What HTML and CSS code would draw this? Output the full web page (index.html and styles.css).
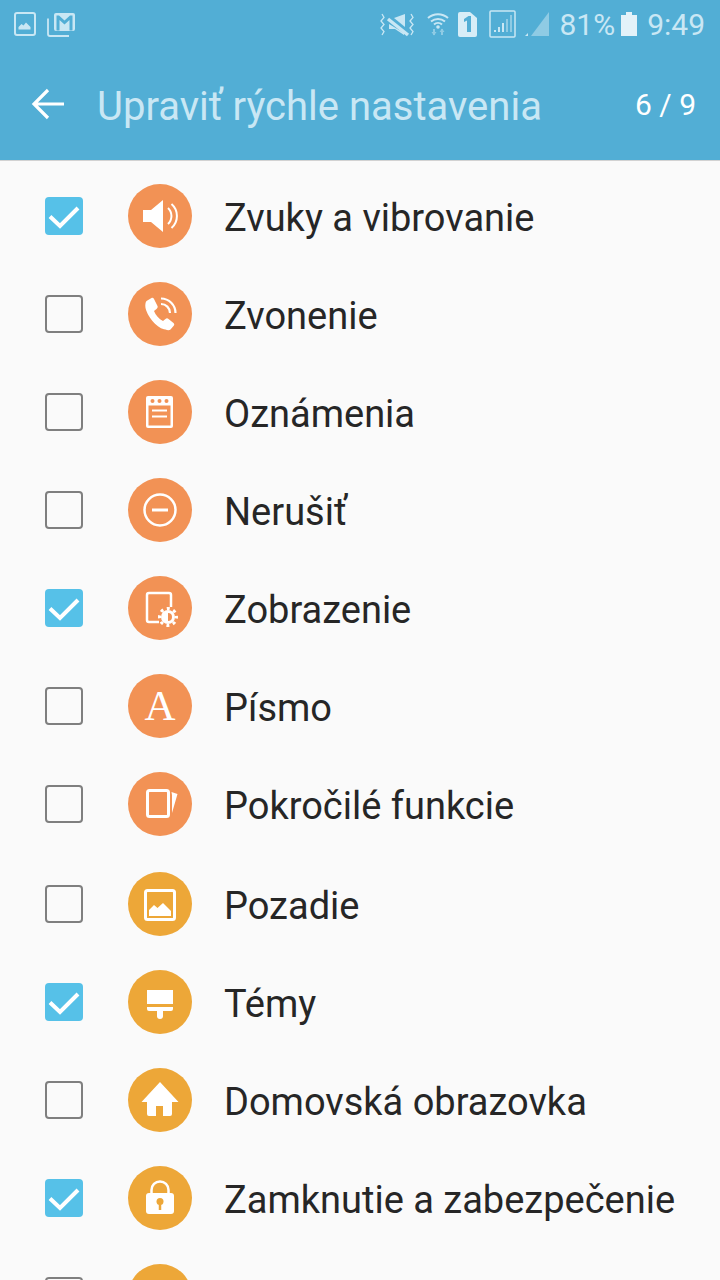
FILE: index.html
```html
<!DOCTYPE html>
<html lang="sk">
<head>
<meta charset="utf-8">
<title>Upraviť rýchle nastavenia</title>
<link rel="stylesheet" href="styles.css">
</head>
<body>
<svg class="defs" width="0" height="0" aria-hidden="true">
  <symbol id="chk" viewBox="0 0 38 38"><path d="M5 19.500 L15 29 L33 11" fill="none" stroke="#fff" stroke-width="4"/></symbol>
</svg>
<header class="appbar">
  <div class="status">
    <div class="status-left">
      <svg class="si" width="22" height="24" viewBox="0 0 22 24"><rect x="1" y="1" width="20" height="22" rx="2" fill="none" stroke="#c9e7f4" stroke-width="2"/><path d="M4.500 17.500V15l3-3 2 1.500 2.500-3 4.500 4.500v2.500z" fill="#c9e7f4"/></svg>
      <svg class="si" width="29" height="25" viewBox="0 0 29 25"><path d="M1 6.500V22a2 2 0 0 0 2 2h19" fill="none" stroke="#c9e7f4" stroke-width="1.800"/><rect x="7" y="1" width="21" height="18" rx="2" fill="#c9e7f4"/><path d="M9.500 3.500v15h3V8l5 4.500 5-4.500v10.500h3v-15h-2.500l-5.500 5-5.500-5z" fill="#52aed5"/></svg>
    </div>
    <div class="status-right">
      <svg class="mute" width="36" height="24" viewBox="0 0 36 24"><path d="M26 1v13L15 5z" fill="#c9e7f4"/><path d="M9 6l20 16" stroke="#c9e7f4" stroke-width="3.500"/><path d="M10 11v5h6l9 6v-2z" fill="#c9e7f4"/><path d="M3 1l2 3.500-3 3.500 3 3.500-3 3.500 3 3.500-2 3.500M32 1l2 3.500-3 3.500 3 3.500-3 3.500 3 3.500-2 3.500" fill="none" stroke="#c9e7f4" stroke-width="1.300"/></svg>
      <svg class="wifi" width="22" height="24" viewBox="0 0 22 24"><path d="M1 6a15 15 0 0 1 20 0M4 9.500a11 11 0 0 1 14 0M7 12.500a6 6 0 0 1 8 0" fill="none" stroke="#c9e7f4" stroke-width="2"/><circle cx="11" cy="15" r="1.800" fill="#c9e7f4"/><path d="M7 17v6M15 17v6" stroke="#8fcbe4" stroke-width="2"/><path d="M4.500 20h5L7 23.500zM12.500 20h5L15 16.500z" fill="#8fcbe4"/></svg>
      <svg class="sim" width="19" height="25" viewBox="0 0 19 25"><path d="M2 0h10l7 6v17a2 2 0 0 1-2 2H2a2 2 0 0 1-2-2V2a2 2 0 0 1 2-2z" fill="#d7edf7"/><path d="M6 7l4.500-3H13v16H9V8.500L6 10z" fill="#52aed5"/></svg>
      <svg class="sig" width="27" height="28" viewBox="0 0 27 28"><rect x="1" y="1" width="25" height="26" rx="1" fill="none" stroke="#c9e7f4" stroke-width="1.500"/><path d="M5 20h2v2H5zM9 17h2v5H9zM13 13h2v9h-2z" fill="#c9e7f4"/><path d="M17 9h2v13h-2zM21 5h2v17h-2z" fill="#8fcbe4"/></svg>
      <svg class="sig2" width="24" height="24" viewBox="0 0 24 24"><path d="M24 0v24H6z" fill="#8fcbe4"/><path d="M0 24l3-3v3z" fill="#c9e7f4"/></svg>
      <span class="pct">81%</span>
      <svg class="bat" width="16" height="24" viewBox="0 0 16 24"><path d="M0 3h5V0h6v3h5v21H0z" fill="#e3f2f9"/></svg>
      <span class="time">9:49</span>
    </div>
  </div>
  <div class="toolbar">
    <svg class="back" width="34" height="32" viewBox="0 0 34 32"><path d="M33 16H3M17 2L3 16l14 14" fill="none" stroke="#fff" stroke-width="3.200"/></svg>
    <h1 class="title">Upraviť rýchle nastavenia</h1>
    <span class="step">6 / 9</span>
  </div>
</header>
<main class="list">
  <div class="group">
    <div class="row"><span class="box on"><svg width="38" height="38"><use href="#chk"/></svg></span><span class="disc orange"><svg width="64" height="64" viewBox="0 0 64 64"><path d="M15 26h8l12-10v32L23 38h-8z" fill="#fff"/><path d="M40 24a11 11 0 0 1 0 16M43.500 20a16 16 0 0 1 0 24" fill="none" stroke="#fff" stroke-width="2"/></svg></span><span class="label">Zvuky a vibrovanie</span></div>
    <div class="row"><span class="box"></span><span class="disc orange"><svg width="64" height="64" viewBox="0 0 64 64"><path d="M18.500 19l5-3c1-.5 2 0 2.500 1l3.500 7c.5 1 0 2-1 3l-2.500 2c1.500 4 5 8 9 10l2.500-2c1-1 2-1 3 0l5 4c1 1 1 2 0 3l-3 3.500c-1 1-3 1-5 0C30 47 20 36 17.500 26c-.5-3 0-6 1-7z" fill="#fff"/><path d="M33 16.500a14.500 14.500 0 0 1 14.500 14.500M33 22a9 9 0 0 1 9 9" fill="none" stroke="#fff" stroke-width="2.200"/></svg></span><span class="label">Zvonenie</span></div>
    <div class="row"><span class="box"></span><span class="disc orange"><svg width="64" height="64" viewBox="0 0 64 64"><rect x="18" y="16" width="27" height="32" rx="2" fill="#fff"/><rect x="20.500" y="25.500" width="22" height="20" fill="#f29255"/><circle cx="24.500" cy="21" r="2" fill="#f29255"/><circle cx="31.500" cy="21" r="2" fill="#f29255"/><circle cx="38.500" cy="21" r="2" fill="#f29255"/><path d="M24 30.500h15M24 36.500h15" stroke="#fff" stroke-width="2"/></svg></span><span class="label">Oznámenia</span></div>
    <div class="row"><span class="box"></span><span class="disc orange"><svg width="64" height="64" viewBox="0 0 64 64"><circle cx="32" cy="32" r="15.500" fill="none" stroke="#fff" stroke-width="2.500"/><path d="M24 32h16" stroke="#fff" stroke-width="3"/></svg></span><span class="label">Nerušiť</span></div>
    <div class="row"><span class="box on"><svg width="38" height="38"><use href="#chk"/></svg></span><span class="disc orange"><svg width="64" height="64" viewBox="0 0 64 64"><path d="M31 46H21a2 2 0 0 1-2-2V19a2 2 0 0 1 2-2h20a2 2 0 0 1 2 2v12" fill="none" stroke="#fff" stroke-width="2.500"/><circle cx="40" cy="41" r="7" fill="#fff"/><circle cx="40" cy="41" r="8.500" fill="none" stroke="#fff" stroke-width="3" stroke-dasharray="3 3.680" stroke-dashoffset="1.500"/><path d="M40 37a4 4 0 0 1 0 8z" fill="#f29255"/></svg></span><span class="label">Zobrazenie</span></div>
    <div class="row"><span class="box"></span><span class="disc orange"><span class="glyph">A</span></span><span class="label">Písmo</span></div>
    <div class="row"><span class="box"></span><span class="disc orange"><svg width="64" height="64" viewBox="0 0 64 64"><rect x="19.500" y="18.500" width="21" height="26" rx="2" fill="none" stroke="#fff" stroke-width="3"/><path d="M43.500 20l6 2-5.500 19V23z" fill="#fff"/></svg></span><span class="label">Pokročilé funkcie</span></div>
  </div>
  <div class="group">
    <div class="row"><span class="box"></span><span class="disc amber"><svg width="64" height="64" viewBox="0 0 64 64"><rect x="17.500" y="18.500" width="29" height="29" rx="2" fill="none" stroke="#fff" stroke-width="3"/><path d="M21 44v-6l5-5 3.500 3 5.500-5 8 8v5z" fill="#fff"/></svg></span><span class="label">Pozadie</span></div>
    <div class="row"><span class="box on"><svg width="38" height="38"><use href="#chk"/></svg></span><span class="disc amber"><svg width="64" height="64" viewBox="0 0 64 64"><path d="M19 20h26v14H19zM19 37h26v2a2 2 0 0 1-2 2h-8v5a3 3 0 0 1-6 0v-5h-8a2 2 0 0 1-2-2z" fill="#fff"/></svg></span><span class="label">Témy</span></div>
    <div class="row"><span class="box"></span><span class="disc amber"><svg width="64" height="64" viewBox="0 0 64 64"><path d="M32 14l18.500 20H44v12a2 2 0 0 1-2 2h-7V38h-7v10h-7a2 2 0 0 1-2-2V34h-5.500z" fill="#fff"/></svg></span><span class="label">Domovská obrazovka</span></div>
    <div class="row"><span class="box on"><svg width="38" height="38"><use href="#chk"/></svg></span><span class="disc amber"><svg width="64" height="64" viewBox="0 0 64 64"><path d="M23.500 30v-6a8.500 8.500 0 0 1 17 0v6" fill="none" stroke="#fff" stroke-width="2.500"/><rect x="18" y="27" width="28" height="21" rx="3" fill="#fff"/><circle cx="32" cy="35.500" r="3.500" fill="#eda738"/><path d="M32 36v8" stroke="#eda738" stroke-width="2.500"/></svg></span><span class="label">Zamknutie a zabezpečenie</span></div>
    <div class="row"><span class="box"></span><span class="disc amber"></span></div>
  </div>
</main>
</body>
</html>
```
FILE: styles.css
```css
* { box-sizing: border-box; }
html, body { margin: 0; padding: 0; }
body {
  width: 720px;
  height: 1280px;
  overflow: hidden;
  background: #fafafa;
  font-family: Roboto, "Noto Sans", sans-serif;
}
.defs { display: block; height: 0; }
.appbar {
  height: 161px;
  background: #52aed5;
  border-bottom: 1px solid #d2d2d2;
  display: flex;
  flex-direction: column;
}
.status {
  height: 50px;
  display: flex;
  justify-content: space-between;
  align-items: flex-start;
  padding: 12px 15px 0 14px;
}
.status-left { display: flex; gap: 11px; align-items: flex-start; }
.status-right {
  display: flex;
  align-items: flex-start;
  color: #c9e7f4;
}
.mute { margin-top: 1px; margin-right: 12px; }
.wifi { margin-right: 9px; }
.sim { margin-right: 12px; }
.sig { margin-top: -2px; margin-right: 9px; }
.sig2 { margin-right: 10px; }
.pct { font-size: 30px; line-height: 26px; margin-right: 6px; }
.bat { margin-right: 10px; }
.time { font-size: 30px; line-height: 26px; }
.toolbar {
  flex: 1;
  display: flex;
  align-items: center;
  padding: 0 24px 0 31px;
}
.back { flex: none; margin-bottom: 2px; }
.title {
  margin: 0 0 0 32px;
  flex: 1;
  font-size: 40px;
  font-weight: 400;
  color: #c9e7f4;
  line-height: 44px;
  padding-top: 3px;
}
.step { font-size: 30px; color: #fff; padding-bottom: 2px; }
.list { height: 1119px; overflow: hidden; padding-top: 6px; }
.group + .group { margin-top: 2px; }
.row {
  height: 98px;
  display: flex;
  align-items: center;
  padding-left: 45px;
}
.box {
  width: 38px;
  height: 38px;
  flex: none;
  border: 2.500px solid #7f7f7f;
  border-radius: 4px;
}
.box.on {
  border: none;
  background: #56c1e8;
}
.box svg { display: block; }
.disc {
  width: 64px;
  height: 64px;
  flex: none;
  border-radius: 50%;
  margin-left: 45px;
  display: flex;
  align-items: center;
  justify-content: center;
}
.disc svg { display: block; }
.orange { background: #f29255; }
.amber { background: #eda738; }
.glyph {
  font-family: "Liberation Serif", serif;
  font-size: 43px;
  line-height: 64px;
  color: #fff;
}
.label {
  margin-left: 32px;
  padding-top: 4px;
  font-size: 38px;
  color: #262626;
  white-space: nowrap;
}
```
